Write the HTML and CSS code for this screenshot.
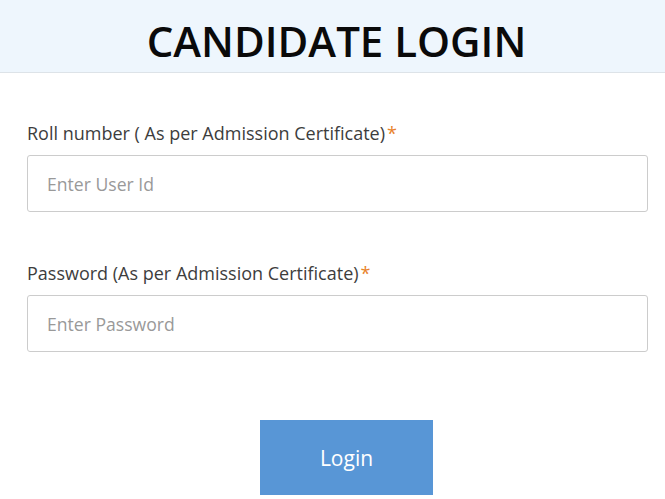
FILE: index.html
```html
<!DOCTYPE html>
<html>
<head>
<meta charset="utf-8">
<link rel="stylesheet" href="styles.css">
</head>
<body>
<header class="head"><h1 class="title">CANDIDATE LOGIN</h1></header>
<form class="form">
  <div class="field">
    <label class="label">Roll number ( As per Admission Certificate)<span class="req">*</span></label>
    <input class="input" type="text" placeholder="Enter User Id">
  </div>
  <div class="field">
    <label class="label">Password (As per Admission Certificate)<span class="req">*</span></label>
    <input class="input" type="password" placeholder="Enter Password">
  </div>
  <div class="actions"><button class="btn" type="button">Login</button></div>
</form>
</body>
</html>
```
FILE: styles.css
```css
* { box-sizing: border-box; }
body { margin: 0; background: #fff; font-family: "Open Sans", "Liberation Sans", sans-serif; color: #333; }
.head { background: #eef6fd; border-bottom: 1px solid #dde3e8; height: 73px; display: flex; justify-content: center; align-items: center; }
.title { margin: 0; font-size: 42px; font-weight: 600; color: #0a0a0a; line-height: 1; padding: 10px 0 0 8px; }
.form { padding: 48px 17px 0 27px; display: flex; flex-direction: column; }
.field { display: flex; flex-direction: column; margin-bottom: 49px; }
.label { font-size: 18px; line-height: 24px; color: #3d3d3d; margin-bottom: 10px; }
.req { color: #e8822a; margin-left: 2px; }
.input { height: 57px; border: 1px solid #ccc; border-radius: 3px; padding: 0 19px; font-family: inherit; font-size: 17.6px; color: #333; outline: none; }
.input::placeholder { color: #999; }
.actions { display: flex; justify-content: center; padding-top: 19px; }
.btn { width: 173px; height: 75px; background: #5896d6; color: #fff; border: none; font-family: inherit; font-size: 21px; margin-left: 18px; }
```
